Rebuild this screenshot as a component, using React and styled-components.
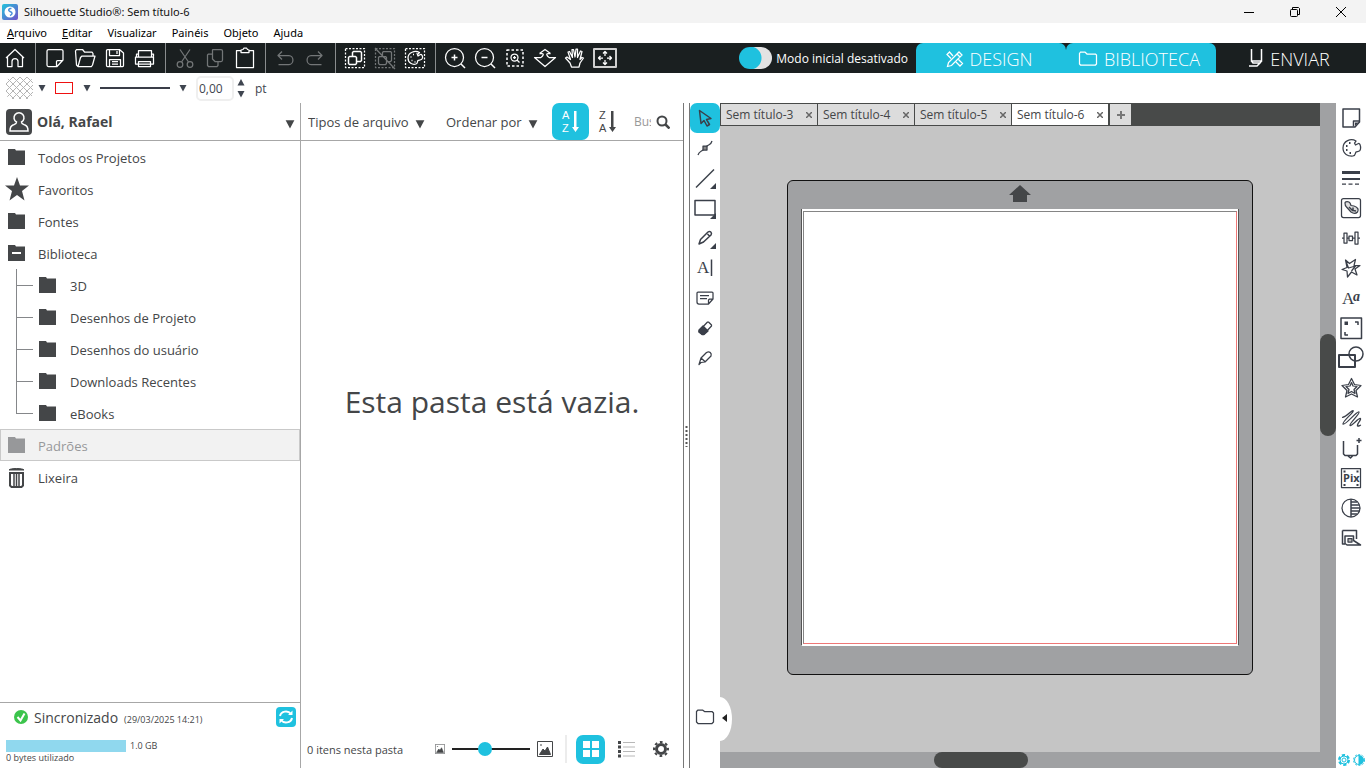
import React, { useState } from 'react';
import styled, { createGlobalStyle } from 'styled-components';

const GlobalStyle = createGlobalStyle`
  * {
    box-sizing: border-box;
  }

  html, body, #root {
    height: 100%;
  }

  body {
    margin: 0;
    overflow: hidden;
    color: #444648;
    background: #fff;
    font-family: 'Open Sans', 'Noto Sans', sans-serif;
    font-size: 13px;
  }

  button, input, select {
    margin: 0;
    padding: 0;
    border: 0;
    color: inherit;
    background: transparent;
    font: inherit;
  }

  ul {
    margin: 0;
    padding: 0;
    list-style: none;
  }

  svg {
    display: block;
    flex: none;
  }
`;

const Window = styled.div`
  display: flex;
  flex-direction: column;
  height: 100%;
`;

const TitleBar = styled.header`
  display: flex;
  align-items: center;
  height: 23px;
  padding: 0 2px;
  gap: 6px;
  color: #111;
  background: #f3f3f3;
`;

const WindowTitle = styled.h1`
  flex: 1;
  margin: 0;
  font-family: 'Noto Sans', sans-serif;
  font-size: 11px;
  font-weight: normal;
`;

const WindowControls = styled.div`
  display: flex;
`;

const WindowButton = styled.button`
  display: flex;
  align-items: center;
  justify-content: center;
  width: 46px;
  height: 20px;
`;

const MenuBar = styled.nav`
  display: flex;
  align-items: center;
  height: 20px;
  padding: 0 7px 2px;
  gap: 15px;
  color: #000;
  font-family: 'Noto Sans', sans-serif;
  font-size: 11px;
`;

const MenuLink = styled.a`
  color: inherit;
  text-decoration: none;
`;

const Toolbar = styled.div`
  display: flex;
  height: 30px;
  background: #1a1f20;
  color: #fff;
`;

const IconButton = styled.button`
  display: flex;
  align-items: center;
  justify-content: center;
  width: 30px;
  height: 30px;
  color: ${({ $muted }) => ($muted ? '#737677' : 'inherit')};
  background: ${({ $active }) => ($active ? '#1fc1df' : 'transparent')};
  border-radius: ${({ $active }) => ($active ? '7px' : '0')};
`;

const Separator = styled.span`
  width: 1px;
  margin: 0 4px 0 5px;
  background: #8a8d8e;
`;

const ModeToggle = styled.label`
  display: flex;
  align-items: center;
  margin-left: auto;
  padding-right: 8px;
  gap: 4px;
  font-size: 12px;
`;

const Switch = styled.input`
  appearance: none;
  width: 33px;
  height: 22px;
  border-radius: 11px;
  background: radial-gradient(circle at 11px 11px, #1fc1df 11px, #e3e3e3 12px);
`;

const ModeTabs = styled.div`
  display: flex;
`;

const ModeTab = styled.button`
  display: flex;
  align-items: center;
  justify-content: center;
  width: 150px;
  padding: 2px 4px 0 0;
  gap: 6px;
  color: #fff;
  background: ${({ $active }) => ($active ? '#1fc1df' : 'transparent')};
  border-radius: 7px 7px 0 0;
  font-size: 18px;
  font-weight: 300;
`;

const PropertyBar = styled.div`
  display: flex;
  align-items: center;
  height: 30px;
  padding-left: 6px;
  color: #3f4550;
  font-size: 12px;
`;

const PropertyButton = styled.button`
  display: flex;
  align-items: center;
  margin-right: 9px;
  gap: ${({ $gap }) => $gap || 5}px;
`;

const ColorSwatch = styled.span`
  width: 18px;
  height: 12px;
  border: 1px solid #e11;
`;

const LineSample = styled.span`
  width: 70px;
  height: 2px;
  background: #3a3e48;
`;

const WeightInput = styled.input`
  width: 38px;
  height: 25px;
  margin-right: 3px;
  padding-left: 1px;
  border: 2px solid #efefef;
  border-radius: 5px;
  font-size: 12px;
`;

const Spinner = styled.div`
  display: flex;
  flex-direction: column;
  margin-right: 10px;
  gap: 4px;
`;

const Workspace = styled.main`
  display: flex;
  flex: 1;
  min-height: 0;
`;

const Library = styled.section`
  display: flex;
  flex-direction: column;
  width: 301px;
  border-right: 1px solid #a7a7a7;
`;

const UserSelect = styled.button`
  display: flex;
  align-items: center;
  height: 38px;
  padding: 0 5px 0 6px;
  gap: 5px;
  border-bottom: 1px solid #a7a7a7;
  font-size: 14px;
  font-weight: bold;
`;

const UserName = styled.span`
  flex: 1;
  text-align: left;
`;

const CaretDrop = styled.span`
  padding-top: 5px;
`;

const Tree = styled.ul`
  flex: 1;
`;

const TreeItem = styled.li`
  display: flex;
  align-items: center;
  height: 32px;
  padding-left: ${({ $child }) => ($child ? '16px' : '4px')};
  gap: ${({ $child }) => ($child ? '10px' : '9px')};
  color: ${({ $selected }) => ($selected ? '#97989a' : '#444648')};
  background: ${({ $selected }) => ($selected ? '#f2f2f2' : 'transparent')};
  border: 1px solid ${({ $selected }) => ($selected ? '#c9c9c9' : 'transparent')};
  border-width: ${({ $child }) => ($child ? '0' : '1px')};
`;

const FolderName = styled.span`
  padding-top: 2px;
`;

const Guide = styled.span`
  display: flex;
  flex-direction: column;
  width: 17px;
  height: 32px;
  margin-right: -7px;

  &::before {
    content: '';
    height: 16px;
    border-left: 1px solid #85878a;
    border-bottom: 1px solid #85878a;
  }

  &::after {
    content: '';
    flex: 1;
    border-left: 1px solid ${({ $last }) => ($last ? 'transparent' : '#85878a')};
  }
`;

const SyncPanel = styled.footer`
  height: 66px;
  padding: 3px 4px 0 6px;
  border-top: 1px solid #a7a7a7;
  font-size: 10px;
  line-height: 12px;
`;

const SyncStatus = styled.div`
  display: flex;
  align-items: center;
  height: 22px;
  margin-bottom: 12px;
  padding-left: 8px;
`;

const SyncTitle = styled.span`
  margin: 0 6px;
  padding-top: 2px;
  font-size: 14px;
`;

const SyncDate = styled.span`
  flex: 1;
  padding-top: 6px;
  font-size: 9px;
`;

const SyncButton = styled.button`
  width: 20px;
  height: 20px;
  border-radius: 4px;
  background: #1fc1df;
`;

const Storage = styled.div`
  display: flex;
  gap: 4px;
  font-size: 9px;
  line-height: 12px;
`;

const StorageBar = styled.span`
  width: 120px;
  height: 12px;
  background: #90d8ee;
`;

const Browser = styled.section`
  display: flex;
  flex-direction: column;
  width: 383px;
  border-right: 1px solid #777;
`;

const FilterBar = styled.div`
  display: flex;
  align-items: center;
  height: 38px;
  padding: 0 13px 0 7px;
  border-bottom: 1px solid #a7a7a7;
`;

const Filter = styled.label`
  display: flex;
  align-items: center;
  margin-right: ${({ $space }) => $space}px;
  gap: 6px;
`;

const FilterSelect = styled.select`
  appearance: none;
`;

const SortButton = styled.button`
  width: 37px;
  height: 37px;
  border-radius: 7px;
  color: ${({ $active }) => ($active ? '#fff' : '#444648')};
  background: ${({ $active }) => ($active ? '#1fc1df' : 'transparent')};
`;

const Search = styled.label`
  display: flex;
  align-items: center;
  margin-left: auto;
  gap: 5px;
`;

const SearchInput = styled.input`
  width: 17px;
  font-size: 12px;

  &::placeholder {
    color: #999;
  }
`;

const EmptyMessage = styled.p`
  display: flex;
  align-items: center;
  justify-content: center;
  flex: 1;
  margin: 0;
  padding-bottom: 68px;
  font-size: 30px;
`;

const BrowserFooter = styled.footer`
  display: flex;
  align-items: center;
  height: 38px;
  padding: 0 2px 0 6px;
`;

const ItemCount = styled.span`
  flex: 1;
  font-size: 11px;
`;

const SizeSlider = styled.input`
  appearance: none;
  width: 78px;
  height: 14px;
  margin: 0 7px;
  background: linear-gradient(#222, #222) center / 100% 2px no-repeat;

  &::-webkit-slider-thumb {
    appearance: none;
    width: 14px;
    height: 14px;
    border-radius: 50%;
    background: #1fc1df;
  }
`;

const FooterDivider = styled.span`
  width: 2px;
  height: 28px;
  margin: 0 9px 0 12px;
  background: #ececec;
`;

const ViewButton = styled.button`
  display: flex;
  align-items: center;
  justify-content: center;
  width: 29px;
  height: 29px;
  margin-right: 6px;
  border-radius: 7px;
  color: ${({ $active }) => ($active ? '#fff' : '#444648')};
  background: ${({ $active }) => ($active ? '#1fc1df' : 'transparent')};
`;

const Sash = styled.div`
  display: flex;
  align-items: center;
  justify-content: center;
  width: 6px;
  border-right: 1px solid #777;
`;

const Tools = styled.div`
  display: flex;
  flex-direction: column;
  width: 30px;
  color: #3a3f49;
`;

const DrawerButton = styled(IconButton)`
  margin-top: auto;
  margin-bottom: 36px;
`;

const Editor = styled.section`
  position: relative;
  display: grid;
  flex: 1;
  grid-template: 23px 1fr 16px / 1fr 16px;
  background: #a0a1a3;
`;

const DocumentTabs = styled.div`
  display: flex;
  padding: 1px;
  gap: 1px;
  background: #484a49;
`;

const DocumentTab = styled.div`
  display: flex;
  align-items: center;
  width: 96px;
  height: 21px;
  padding-left: 5px;
  background: ${({ $active }) => ($active ? '#fff' : '#dcdcdc')};
  font-size: 12px;
`;

const TabTitle = styled.button`
  flex: 1;
  text-align: left;
`;

const TabClose = styled.button`
  width: 16px;
  height: 20px;

  svg {
    margin: 0 auto;
  }
`;

const NewTab = styled(TabClose)`
  width: 21px;
  height: 21px;
  margin-left: 1px;
  background: #dcdcdc;
`;

const Canvas = styled.div`
  padding-top: 54px;
  background: #c5c5c5;
`;

const Mat = styled.div`
  width: 466px;
  height: 495px;
  margin: 0 auto;
  padding: 4px 13px 0;
  border: 1px solid #111;
  border-radius: 6px;
  background: #a0a1a3;

  svg {
    margin: 0 auto 7px;
  }
`;

const Page = styled.div`
  height: 437px;
  padding: 2px 1px 1px;
  border: 1px solid #555;
  border-bottom-color: #fff;
  border-top: 0;
  background: #fff;
`;

const CutArea = styled.div`
  height: 100%;
  border: 1px solid #858585;
  border-right-color: #e77;
  border-bottom-color: #e77;
`;

const VerticalScroll = styled.div`
  display: flex;
  grid-area: 1 / 2 / 4 / 3;
  flex-direction: column;
  padding-top: 231px;
`;

const HorizontalScroll = styled.div`
  display: flex;
  grid-area: 3 / 1 / 4 / 2;
  padding-left: 214px;
`;

const ScrollThumb = styled.span`
  width: ${({ $vertical }) => ($vertical ? '16px' : '94px')};
  height: ${({ $vertical }) => ($vertical ? '102px' : '16px')};
  border-radius: 8px;
  background: #484a49;
`;

const DrawerHandle = styled.button`
  position: absolute;
  bottom: 27px;
  left: 0;
  display: flex;
  align-items: center;
  width: 12px;
  height: 44px;
  padding: 0 0 3px 1px;
  border-radius: 0 12px 12px 0 / 0 22px 22px 0;
  background: #fff;
  color: #222;
`;

const PanelBar = styled.aside`
  display: flex;
  flex-direction: column;
  width: 30px;
  color: #3a3f49;
`;

const PanelFooter = styled.div`
  display: flex;
  margin-top: auto;
  padding: 0 1px 1px;
  gap: 1px;
  color: #1fc1df;
`;

const TinyButton = styled.button`
  width: 14px;
  height: 14px;
`;

/* every glyph is drawn inside a 30x30 cell */
const glyphs = {
  home: <path d="M6 15 15 6.500 24 15M7.500 13.500V23.500h4.500v-5a3 3 0 0 1 6 0v5h4.500V13.500" />,
  page: <path d="M8.500 6.500h13a1.500 1.500 0 0 1 1.500 1.500v9l-6 6.500H8.500A1.500 1.500 0 0 1 7 22V8a1.500 1.500 0 0 1 1.500-1.500zM16.500 23.500v-5a1 1 0 0 1 1-1H23" />,
  square: <><path d="M7 6h16.500v13L19 24H7z" strokeWidth="1.500" /><path d="M17.500 23.500v-5.500h6" strokeWidth="1.500" /><path d="M19 19.500h3.500L19 23z" fill="currentColor" stroke="none" /></>,
  open: <path d="M8 23.500 6.500 22 5.500 8l1-1.500h6l2 2.500H22l1 1.500V13M8 23.500l2.500-9L12 13h13l-2.500 9-1 1.500z" />,
  save: <path d="M7.500 6.500h12L23.500 10v12.500a1 1 0 0 1-1 1h-15a1 1 0 0 1-1-1v-15a1 1 0 0 1 1-1zM9.500 7v5.500h10V7M17 8v3M9.500 23v-6.500h11V23M12 18.500h6M12 21h6" />,
  print: <path d="M8.500 14V7.500h13V14M8.500 11H6.500v2.500M21.500 11h2v2.500M5.500 14h18v7H5.500zM8.500 18.500h12v5h-12zM21 11.500h1" />,
  cut: <path d="M10 6.500 18.500 19M20 6.500 11.500 19M12.800 21.500a2.800 2.800 0 1 1-5.600 0 2.800 2.800 0 1 1 5.600 0zM22.800 21.500a2.800 2.800 0 1 1-5.600 0 2.800 2.800 0 1 1 5.600 0z" />,
  copy: <path d="M13 6.500h8A1.500 1.500 0 0 1 22.500 8v9a1.500 1.500 0 0 1-1.500 1.500h-6L12.500 16V7zM12 11H8.500L7.500 12v10.500l1 1H17l1-1V19" />,
  paste: <path d="M11 7.500H6.500v17h17v-17H19M11 9.500V7l2-.5L14 5h2.500l1 1.500L19 7v2.500z" />,
  undo: <path d="m12 8.500-4 4 4 4M8.500 12.500H19a3.500 4 0 0 1 0 9H8.500" />,
  redo: <path d="m18 8.500 4 4-4 4M21.500 12.500H11a3.500 4 0 0 0 0 9h10.500" />,
  selectAll: <><path d="M5.500 5.500h19v19h-19z" strokeDasharray="2 1.500" /><path d="M12.500 13V9.500l1-1h7l1 1v8l-1 1H17M9.500 13.500h6l1 1v6l-1 1h-6l-1-1v-6z" strokeWidth="1.500" /></>,
  selectNone: <><path d="M5.500 5.500h19v19h-19z" strokeDasharray="2 1.500" /><path d="M12.500 13V9.500l1-1h7l1 1v8l-1 1H17M9.500 13.500h6l1 1v6l-1 1h-6l-1-1v-6zM5 5l20 21" /></>,
  selectColor: <><path d="M5.500 5.500h19v19h-19z" strokeDasharray="2 1.500" /><path d="M19.500 9.500c-4.500-2.500-11.500 0-11.500 5.500 0 5 4.500 7 8 6 2-.5 1-2.500 2-3.500s4 .5 4.500-2.500c.5-2-1-4-2-3.500l-2.500 1.500-.5-1.500z" /><path d="M10.500 14h1M13 11.500h1M11.500 17.500h1M14.500 19h1M16.500 10.500h1" strokeWidth="1.500" /></>,
  zoomIn: <><circle cx="14.500" cy="14.500" r="9" /><path d="m21 21 4 4M11.500 14.500h6M14.500 11.500v6" strokeWidth="1.500" /></>,
  zoomOut: <><circle cx="14.500" cy="14.500" r="9" /><path d="m21 21 4 4M11.500 14.500h6" strokeWidth="1.500" /></>,
  zoomArea: <><path d="M7 7h16v16H7z" strokeDasharray="2.500 2" strokeWidth="1.500" /><circle cx="14.500" cy="14.500" r="3.500" /><path d="m17 17 2.500 2.500M13 14.500h3M14.500 13v3" /></>,
  zoomDrag: <path d="M11 14.500H4.500L15 23.500l10.500-9H19M9.500 10.500 15 6.500l5.500 4M9.500 10.500H12c2 0 1.500 2-1 4M20.500 10.500H18c-2 0-1.500 2 1 4" />,
  hand: <path d="m11.500 24-1.500-4-4.500-5 1.500-1 3.500 2.500L8 9l1.500-.5 3 6-.5-8h1.500l1.500 7.500 1-8h1.500v8.500l3-6.500 1.500.5-2 8 2-2 1.500.5L20 20l-1 4z" />,
  fit: <><path d="M4 6h22v18H4z" stroke="#cfcfcf" strokeWidth="2" /><path d="M15 8.500V13M15 17v4.500M8.500 15H13M17 15h4.500M13 10.500l2-2 2 2M13 19.500l2 2 2-2M10.500 13l-2 2 2 2M19.500 13l2 2-2 2" /></>,
  pointer: <path d="m9.500 7.500 1.500 13 3-3 3 5.500 2.500-1.500-3-5 4.500-1z" strokeWidth="1.500" />,
  nodes: <><path d="M8 22c1-3.500 3-3.500 5-5l4-4c2-1.500 4-1 5-5" /><path d="M13 13h4v4h-4z" fill="#888" /></>,
  line: <><path d="M6 24.500 24 6.500" strokeWidth="1.500" /><path d="M26 20v6h-6z" fill="currentColor" stroke="none" /></>,
  rect: <><path d="M5 7.500h20V22H5z" strokeWidth="1.500" /><path d="M26 20v6h-6z" fill="currentColor" stroke="none" /></>,
  pencil: <><path d="m9 21 1.500-4.500 7.500-7.500c2-1.500 4.500.5 3 3L13.500 19zM17.500 11l2 2" strokeWidth="1.500" /><path d="M26 20v6h-6z" fill="currentColor" stroke="none" /></>,
  text: <><text x="7" y="20" fontSize="17">A</text><path d="M21.500 6.500V23" strokeWidth="1.500" /></>,
  note: <path d="M8 9h14a1 1 0 0 1 1 1v6l-4.500 5H9a2 2 0 0 1-2-2v-9a1 1 0 0 1 1-1zM23 16h-3.500l-1 1v4M10 12.500h9M10 15.500h7" />,
  eraser: <><path d="m9 18 8.500-9h1l3 3v1L14 21h-2l-3-2z" /><path d="m9 17 4-4 5 5-4 3.500h-2l-3-2.500z" fill="currentColor" /></>,
  knife: <path d="m9 21.500 2-6.500 5.500-5.500c3-1.500 5.500.5 4.500 3.500L15 19l-4 .5zM11 15l4.500 4M9 21.500l2-2" />,
  drawer: <path d="M6.500 9.500 8 8h4.500l2 1.500H22L23.500 11v9L22 21.500H8L6.500 20z" />,
  palette: <><path d="M20 8c-5-3-13-.5-13 7 0 6 5 8.500 10 8 3-.5 2-3 3-4s4 .5 4.500-3c.5-3.500-1-6-2-5.500L19.500 12l-1-2z" /><path d="M10 13h1.500M10 17h1.500M13.500 20h1.500M13 10h1.500" strokeWidth="2" /></>,
  lines: <><path d="M6 9.500h18" strokeWidth="3" /><path d="M6 16h18" strokeWidth="2" /><path d="M6 21h18" strokeDasharray="4 2.500" /></>,
  trace: <><rect x="5.500" y="5.500" width="19" height="19" rx="2" /><path d="M9 10c0-2 4-2 5 0l1 2.500 3 .5c4 1 5 4 3.500 6-2 2-5 1-6.500 0L10.500 14C9 13 9 12 9 10z" fill="#ddd" /><path d="m13 14 4 4M17 14.500v3l3 .5" strokeWidth="1.500" /></>,
  align: <path d="M6 15h2M11 15h2M16.500 15H19M22 15h2M8 10h3v10H8zM13 13h3.500v4.500H13zM19 9h3v12h-3z" strokeWidth="1.250" />,
  spark: <path d="m9.500 7 4 3.500 6-4-1.500 6h6l-5 3.500 2 6-5.500-3-4 5-.5-6-5-1.500 5-2zM9.500 7l3 8 7-2-4 5" />,
  font: <><text x="6" y="21" fontSize="17">A</text><text x="17" y="18" fontSize="14" fontStyle="italic" fontWeight="bold">a</text></>,
  frame: <><path d="M5 5h20.500v20.500H5z" strokeWidth="1.500" /><path d="M8.500 8.500h3.500v3.500H8.500z" fill="currentColor" stroke="none" /><path d="M19 9h3v3M9 19v3h3" strokeWidth="1.500" /></>,
  shapes: <><circle cx="20" cy="11" r="7" strokeWidth="1.500" /><path d="M3 12h16v12H3z" strokeWidth="2" /></>,
  star: <path d="m15.500 5.500 3 6 6.500 1-5 5 1.500 6.500-6-3-6 3L11 17.500l-5-5 6.500-1zM15.500 9.500l1.500 3.500 4 .500-3 3 1 4-3.500-2-3.500 2 1-4-3-3 4-.5z" />,
  scribble: <path d="M6 14.500c5-.5 9-7 11-7 2 1-11 11-10 13.500C9 23 21 7.500 23 9c1.500 1.500-10 11.500-9 13.500 2 1 8.500-8 10.500-7 1 1.500-4 5.500-3 7.500 1 .5 2-.5 3.500-1" />,
  blade: <path d="M7.500 8v13L9 22.500h11l1.500-1.500v-9M12 23l2.500 2 2-2M20.500 7.500h5M23 5v5" strokeWidth="1.500" />,
  pix: <><path d="M5.500 5.500h19v19h-19z" /><path d="M7.500 8.500h2M20.500 8.500h2M7.500 22h2M20.500 22h2" strokeWidth="2" /><text x="7" y="19" fontSize="11" fontWeight="bold" fontFamily="Open Sans, sans-serif">Pix</text></>,
  contrast: <><circle cx="15" cy="15" r="9" /><path d="M15 6v18M15 9h6M15 12h8M15 15h9M15 18h8M15 21h6" strokeWidth="1.500" /></>,
  emboss: <><path d="M6.500 7.500h14v8.500M6.500 7.500V21H9" strokeWidth="1.500" /><path d="M9 20.500V13h8.500v4.500l7 4.500H11z" strokeWidth="1.500" /><path d="M12 15.500h4V19h-4z" fill="#bbb" /></>,
};

const StyledGlyph = styled.svg`
  fill: none;
  stroke: currentColor;
  stroke-linejoin: round;
  font-family: 'Liberation Serif', serif;

  text {
    fill: currentColor;
    stroke: none;
  }
`;

const Glyph = ({ name }) => (
  <StyledGlyph width="30" height="30" viewBox="0 0 30 30" strokeWidth="1.25" aria-hidden="true">
    {glyphs[name]}
  </StyledGlyph>
);

const Caret = ({ size = 8 }) => (
  <svg width={size} height={size} viewBox="0 0 8 8" fill="currentColor"><path d="M.5 1h7L4 7.500z" /></svg>
);

const CaretUp = () => (
  <svg width="8" height="7" viewBox="0 0 8 7" fill="currentColor"><path d="M.5 6.500h7L4 0z" /></svg>
);

const FolderIcon = ({ open }) => (
  <svg width="24" height="24" viewBox="0 0 24 24" fill="currentColor">
    <path d="M3 4h7l1 1.500h9V20H3z" />
    {open ? <path d="M7 11h9v2H7z" fill="#fff" /> : null}
  </svg>
);

const StarIcon = () => (
  <svg width="24" height="24" viewBox="0 0 24 24" fill="currentColor">
    <path d="m12 0 3 8.500h9l-7 5.500 2.500 9.500L12 18l-7.500 5.500L7 14 0 8.500h9z" />
  </svg>
);

const TrashIcon = () => (
  <svg width="24" height="24" viewBox="0 0 24 24" fill="none" stroke="currentColor">
    <path d="M5 8v12.500l1.500 1.500h10l1.500-1.500V8z" strokeWidth="2" />
    <path d="M9 8v13M11.500 8v13M14 8v13" strokeWidth="1.500" />
    <path d="M4 5c1-2 14-2 15 0z" fill="currentColor" />
  </svg>
);

const PictureIcon = ({ size }) => (
  <svg width={size} height={size} viewBox="0 0 16 16" fill="none" stroke="currentColor">
    <path d="M.5.5h15v15H.5z" />
    <path d="M2.500 13.500 6 8l2 2 2.500-4 3 7.500zM3 4h2" fill="currentColor" />
  </svg>
);

const toolbarGroups = [
  [['home', 'Início']],
  [['page', 'Novo'], ['open', 'Abrir'], ['save', 'Salvar'], ['print', 'Imprimir']],
  [['cut', 'Recortar', true], ['copy', 'Copiar', true], ['paste', 'Colar']],
  [['undo', 'Desfazer', true], ['redo', 'Refazer', true]],
  [['selectAll', 'Selecionar tudo'], ['selectNone', 'Desmarcar tudo', true], ['selectColor', 'Selecionar por cor']],
  [['zoomIn', 'Mais zoom'], ['zoomOut', 'Menos zoom'], ['zoomArea', 'Zoom na seleção'], ['zoomDrag', 'Arrastar zoom'], ['hand', 'Panorâmica'], ['fit', 'Ajustar à janela']],
];

const folders = [
  { label: 'Todos os Projetos' },
  { label: 'Favoritos', icon: <StarIcon /> },
  { label: 'Fontes' },
  { label: 'Biblioteca', icon: <FolderIcon open /> },
  { label: '3D', child: true },
  { label: 'Desenhos de Projeto', child: true },
  { label: 'Desenhos do usuário', child: true },
  { label: 'Downloads Recentes', child: true },
  { label: 'eBooks', child: true, last: true },
  { label: 'Padrões', selected: true },
  { label: 'Lixeira', icon: <TrashIcon /> },
];

const tools = ['pointer', 'nodes', 'line', 'rect', 'pencil', 'text', 'note', 'eraser', 'knife'];
const panels = ['square', 'palette', 'lines', 'trace', 'align', 'spark', 'font', 'frame', 'shapes', 'star', 'scribble', 'blade', 'pix', 'contrast', 'emboss'];
const documents = ['Sem título-3', 'Sem título-4', 'Sem título-5', 'Sem título-6'];

const Header = () => (
  <>
    <TitleBar>
      <svg width="16" height="16" viewBox="0 0 16 16">
        <defs>
          <linearGradient id="logo" x1="0" y1="0" x2="1" y2="1">
            <stop offset="0" stopColor="#21c4dc" />
            <stop offset="1" stopColor="#7350c8" />
          </linearGradient>
        </defs>
        <rect width="16" height="16" rx="2" fill="url(#logo)" />
        <circle cx="8" cy="8" r="5.500" fill="#fff" />
        <path d="M9.500 4.500C7 4 5.500 6.500 8 7.500s3 2.500 0 4" fill="none" stroke="#4a90d9" strokeWidth="1.500" />
      </svg>
      <WindowTitle>Silhouette Studio®: Sem título-6</WindowTitle>
      <WindowControls>
        <WindowButton aria-label="Minimizar">
          <svg width="10" height="10" stroke="#000"><path d="M0 5.500h10" /></svg>
        </WindowButton>
        <WindowButton aria-label="Restaurar">
          <svg width="10" height="10" fill="none" stroke="#000"><rect x=".5" y="2.500" width="7" height="7" rx="1" /><path d="M2.500 2V.5h6l1 1v6H8" /></svg>
        </WindowButton>
        <WindowButton aria-label="Fechar">
          <svg width="10" height="10" stroke="#000"><path d="m0 0 10 10M10 0 0 10" /></svg>
        </WindowButton>
      </WindowControls>
    </TitleBar>
    <MenuBar>
      <MenuLink href="#"><u>A</u>rquivo</MenuLink>
      <MenuLink href="#"><u>E</u>ditar</MenuLink>
      <MenuLink href="#">Visualizar</MenuLink>
      <MenuLink href="#">Painéis</MenuLink>
      <MenuLink href="#">Objeto</MenuLink>
      <MenuLink href="#">Ajuda</MenuLink>
    </MenuBar>
  </>
);

const MainToolbar = () => (
  <Toolbar>
    {toolbarGroups.map((group, index) => (
      <React.Fragment key={group[0][0]}>
        {index > 0 ? <Separator /> : null}
        {group.map(([name, label, muted]) => (
          <IconButton key={name} aria-label={label} $muted={muted}>
            <Glyph name={name} />
          </IconButton>
        ))}
      </React.Fragment>
    ))}
    <ModeToggle>
      <Switch type="checkbox" />
      Modo inicial desativado
    </ModeToggle>
    <ModeTabs>
      <ModeTab $active>
        <svg width="18" height="18" viewBox="0 0 18 18" fill="none" stroke="currentColor" strokeWidth="1.250">
          <path d="m1.500 16.500 1-4L13 2l3 3L5.500 15.500zM7 6 3.500 2 1 4.500 5 8.500M10 12l4 4 2.500-2.500L12.500 9.500M11 4l3 3" />
        </svg>
        DESIGN
      </ModeTab>
      <ModeTab $active>
        <svg width="20" height="18" viewBox="0 0 20 18" fill="none" stroke="currentColor" strokeWidth="1.250">
          <path d="M1.500 3.500 2.500 2H7l2 2h8.500l1 1v9l-1 1H2.500l-1-1z" />
        </svg>
        BIBLIOTECA
      </ModeTab>
      <ModeTab>
        <svg width="16" height="22" viewBox="0 0 16 22" fill="none" stroke="currentColor" strokeWidth="1.500">
          <path d="M3.500 1v12h10V1M3.500 13l1.500 2h7l1.500-2M12 15l-3 3H1" />
        </svg>
        ENVIAR
      </ModeTab>
    </ModeTabs>
  </Toolbar>
);

const LineProperties = () => (
  <PropertyBar>
    <PropertyButton aria-label="Preenchimento">
      <svg width="27" height="22">
        <defs>
          <pattern id="mesh" width="7" height="7" patternUnits="userSpaceOnUse">
            <path d="m0 0 7 7M7 0 0 7" stroke="#b5b5b5" />
          </pattern>
        </defs>
        <rect width="27" height="22" rx="6" fill="url(#mesh)" />
      </svg>
      <Caret />
    </PropertyButton>
    <PropertyButton aria-label="Cor da linha" $gap={10}>
      <ColorSwatch />
      <Caret />
    </PropertyButton>
    <PropertyButton aria-label="Estilo da linha" $gap={9}>
      <LineSample />
      <Caret />
    </PropertyButton>
    <WeightInput id="weight" defaultValue="0,00" />
    <Spinner>
      <button aria-label="Aumentar"><CaretUp /></button>
      <button aria-label="Diminuir"><Caret /></button>
    </Spinner>
    <label htmlFor="weight">pt</label>
  </PropertyBar>
);

const LibraryPanel = () => (
  <Library>
    <UserSelect>
      <svg width="26" height="26" viewBox="0 0 26 26">
        <rect width="26" height="26" rx="4" fill="#444648" />
        <path d="M10.500 13a5 5 0 1 1 5 0c0 2 1 2 3.500 3s3 3 3 6H4c0-3 .5-5 3-6s3.500-1 3.500-3z" fill="none" stroke="#fff" strokeWidth="1.500" />
      </svg>
      <UserName>Olá, Rafael</UserName>
      <CaretDrop><Caret size={10} /></CaretDrop>
    </UserSelect>
    <Tree>
      {folders.map(({ label, icon, child, last, selected }) => (
        <TreeItem key={label} $child={child} $selected={selected}>
          {child ? <Guide $last={last} /> : null}
          {icon || <FolderIcon />}
          <FolderName>{label}</FolderName>
        </TreeItem>
      ))}
    </Tree>
    <SyncPanel>
      <SyncStatus>
        <svg width="14" height="14" viewBox="0 0 14 14">
          <circle cx="7" cy="7" r="7" fill="#3cc44c" />
          <path d="m3.500 7 3 3.500 4-7" fill="none" stroke="#fff" strokeWidth="2" />
        </svg>
        <SyncTitle>Sincronizado</SyncTitle>
        <SyncDate>(29/03/2025 14:21)</SyncDate>
        <SyncButton aria-label="Sincronizar">
          <svg width="20" height="20" viewBox="0 0 20 20" fill="none" stroke="#fff" strokeWidth="2">
            <path d="M4 9c1-5 8-6 11-2M16 11c-1 5-8 6-11 2" />
            <path d="M16.500 3.500V8H12zM3.500 16.500V12H8z" fill="#fff" stroke="none" />
          </svg>
        </SyncButton>
      </SyncStatus>
      <Storage><StorageBar />1.0 GB</Storage>
      <Storage>0 bytes utilizado</Storage>
    </SyncPanel>
  </Library>
);

const SortText = styled.text`
  font-family: 'Liberation Sans', sans-serif;
  font-size: 11px;
`;

const SortIcon = ({ first, second }) => (
  <svg width="37" height="37" viewBox="0 0 37 37" fill="currentColor">
    <SortText x="10" y="16">{first}</SortText>
    <SortText x="10" y="29">{second}</SortText>
    <path d="M22 8h2.500v16H27l-3.500 5-3.500-5h2z" />
  </svg>
);

const LibraryBrowser = () => {
  const [size, setSize] = useState(40);

  return (
    <Browser>
      <FilterBar>
        <Filter $space={21}>
          <FilterSelect aria-label="Tipos de arquivo">
            <option>Tipos de arquivo</option>
          </FilterSelect>
          <CaretDrop><Caret size={10} /></CaretDrop>
        </Filter>
        <Filter $space={14}>
          <FilterSelect aria-label="Ordenar por">
            <option>Ordenar por</option>
          </FilterSelect>
          <CaretDrop><Caret size={10} /></CaretDrop>
        </Filter>
        <SortButton $active aria-label="Crescente"><SortIcon first="A" second="Z" /></SortButton>
        <SortButton aria-label="Decrescente"><SortIcon first="Z" second="A" /></SortButton>
        <Search>
          <SearchInput placeholder="Buscar" aria-label="Buscar" />
          <svg width="14" height="14" viewBox="0 0 14 14" fill="none" stroke="currentColor" strokeWidth="2">
            <circle cx="6" cy="6" r="4.500" /><path d="m9.500 9.500 4 4" strokeWidth="2.500" />
          </svg>
        </Search>
      </FilterBar>
      <EmptyMessage>Esta pasta está vazia.</EmptyMessage>
      <BrowserFooter>
        <ItemCount>0 itens nesta pasta</ItemCount>
        <PictureIcon size={10} />
        <SizeSlider type="range" aria-label="Tamanho" value={size} onChange={(e) => setSize(e.target.value)} />
        <PictureIcon size={16} />
        <FooterDivider />
        <ViewButton $active aria-label="Grade">
          <svg width="16" height="16" fill="currentColor"><path d="M0 0h7v7H0zM9 0h7v7H9zM0 9h7v7H0zM9 9h7v7H9z" /></svg>
        </ViewButton>
        <ViewButton aria-label="Lista">
          <svg width="18" height="18" fill="none">
            <path d="M1 2.500h3M1 7h3M1 11.500h3M1 16h3" stroke="currentColor" strokeWidth="3" />
            <path d="M6 2.500h12M6 7h12M6 11.500h12M6 16h12" stroke="#b8b8b8" />
          </svg>
        </ViewButton>
        <ViewButton aria-label="Configurações">
          <svg width="16" height="16" viewBox="0 0 16 16" fill="none" stroke="currentColor">
            <circle cx="8" cy="8" r="4.500" strokeWidth="3" />
            <circle cx="8" cy="8" r="7" strokeWidth="2" strokeDasharray="2.750" strokeDashoffset="1.375" />
          </svg>
        </ViewButton>
      </BrowserFooter>
    </Browser>
  );
};

const DocumentEditor = () => (
  <Editor>
    <DocumentTabs>
      {documents.map((name) => (
        <DocumentTab key={name} $active={name === 'Sem título-6'}>
          <TabTitle>{name}</TabTitle>
          <TabClose aria-label={`Fechar ${name}`}>
            <svg width="6" height="6" stroke="#666" strokeWidth="1.500"><path d="m0 0 6 6M6 0 0 6" /></svg>
          </TabClose>
        </DocumentTab>
      ))}
      <NewTab aria-label="Novo documento">
        <svg width="8" height="8" stroke="#777" strokeWidth="2"><path d="M0 4h8M4 0v8" /></svg>
      </NewTab>
    </DocumentTabs>
    <Canvas>
      <Mat>
        <svg width="22" height="17" fill="#444648"><path d="M11 0 22 10h-4v7H4v-7H0z" /></svg>
        <Page>
          <CutArea />
        </Page>
      </Mat>
    </Canvas>
    <VerticalScroll><ScrollThumb $vertical /></VerticalScroll>
    <HorizontalScroll><ScrollThumb /></HorizontalScroll>
    <DrawerHandle aria-label="Recolher painel">
      <svg width="7" height="10" fill="currentColor"><path d="M6 1v8L1 5z" /></svg>
    </DrawerHandle>
  </Editor>
);

const App = () => (
  <Window>
    <GlobalStyle />
    <Header />
    <MainToolbar />
    <LineProperties />
    <Workspace>
      <LibraryPanel />
      <LibraryBrowser />
      <Sash>
        <svg width="3" height="22" stroke="#555" strokeWidth="2"><path d="M1.500 1v21" strokeDasharray="2" /></svg>
      </Sash>
      <Tools>
        {tools.map((name) => (
          <IconButton key={name} aria-label={name} $active={name === 'pointer'}>
            <Glyph name={name} />
          </IconButton>
        ))}
        <DrawerButton aria-label="Biblioteca"><Glyph name="drawer" /></DrawerButton>
      </Tools>
      <DocumentEditor />
      <PanelBar>
        {panels.map((name) => (
          <IconButton key={name} aria-label={name}><Glyph name={name} /></IconButton>
        ))}
        <PanelFooter>
          <TinyButton aria-label="Preferências">
            <svg width="14" height="14" fill="none" stroke="currentColor">
              <circle cx="7" cy="7" r="2" />
              <circle cx="7" cy="7" r="4" />
              <circle cx="7" cy="7" r="5" strokeWidth="2" strokeDasharray="3.200 2" />
            </svg>
          </TinyButton>
          <TinyButton aria-label="Tema">
            <svg width="14" height="14" fill="none" stroke="currentColor">
              <circle cx="7" cy="7" r="4.500" />
              <circle cx="7" cy="7" r="5.500" strokeDasharray="2 1.500" />
              <path d="M7 3a4 4 0 0 1 0 8z" fill="currentColor" />
            </svg>
          </TinyButton>
        </PanelFooter>
      </PanelBar>
    </Workspace>
  </Window>
);

export default App;
